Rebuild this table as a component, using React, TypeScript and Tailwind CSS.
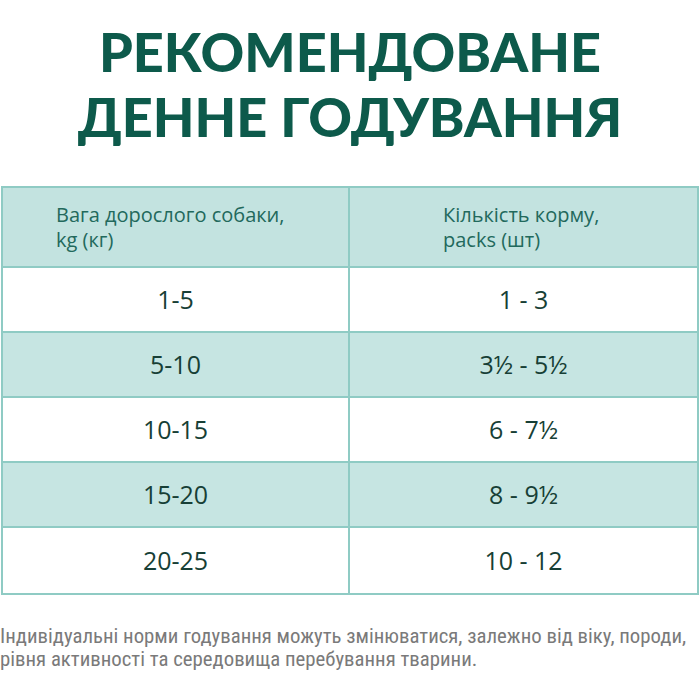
import React from 'react';

const rows = [
  { weight: '1-5', amount: '1 - 3' },
  { weight: '5-10', amount: '3½ - 5½' },
  { weight: '10-15', amount: '6 - 7½' },
  { weight: '15-20', amount: '8 - 9½' },
  { weight: '20-25', amount: '10 - 12' },
];

export default function App() {
  return (
    <div className="w-[700px] h-[700px] bg-white overflow-hidden">
      {/* Title */}
      <h1
        className="pt-[19px] text-center text-[#0d5a4b] text-[54px] font-black leading-[65px] uppercase"
        style={{ fontFamily: 'Lato, "Open Sans", sans-serif' }}
      >
        Рекомендоване
        <br />
        денне годування
      </h1>

      {/* Table */}
      <div
        className="mt-[37px] mx-[1px] border-2 border-[#8fcbc4]"
        style={{ fontFamily: '"Open Sans", "Noto Sans", sans-serif' }}
      >
        <div className="grid grid-cols-2 h-[80px] bg-[#c3e3e0] border-b-2 border-[#8fcbc4]">
          <div className="flex items-center pl-[53px] border-r-2 border-[#8fcbc4] text-[20px] leading-[25px] text-[#22695c]">
            <div>
              Вага дорослого собаки,
              <br />
              kg (кг)
            </div>
          </div>
          <div className="flex items-center pl-[93px] text-[20px] leading-[25px] text-[#22695c]">
            <div>
              Кількість корму,
              <br />
              packs (шт)
            </div>
          </div>
        </div>
        {rows.map((r, i) => (
          <div
            key={r.weight}
            className={
              'grid grid-cols-2 h-[65px] text-[25px] text-[#173f36] ' +
              (i % 2 === 1 ? 'bg-[#c6e5e2] ' : 'bg-white ') +
              (i < rows.length - 1 ? 'border-b-2 border-[#8fcbc4]' : '')
            }
          >
            <div className="flex items-center justify-center border-r-2 border-[#8fcbc4]">
              {r.weight}
            </div>
            <div className="flex items-center justify-center">{r.amount}</div>
          </div>
        ))}
      </div>

      {/* Note */}
      <p
        className="mt-[30px] text-[20.8px] leading-[23px] text-[#7a7a7a]"
        style={{ fontFamily: '"Liberation Sans Narrow", "Roboto Condensed", sans-serif' }}
      >
        Індивідуальні норми годування можуть змінюватися, залежно від віку, породи,
        <br />
        рівня активності та середовища перебування тварини.
      </p>
    </div>
  );
}
